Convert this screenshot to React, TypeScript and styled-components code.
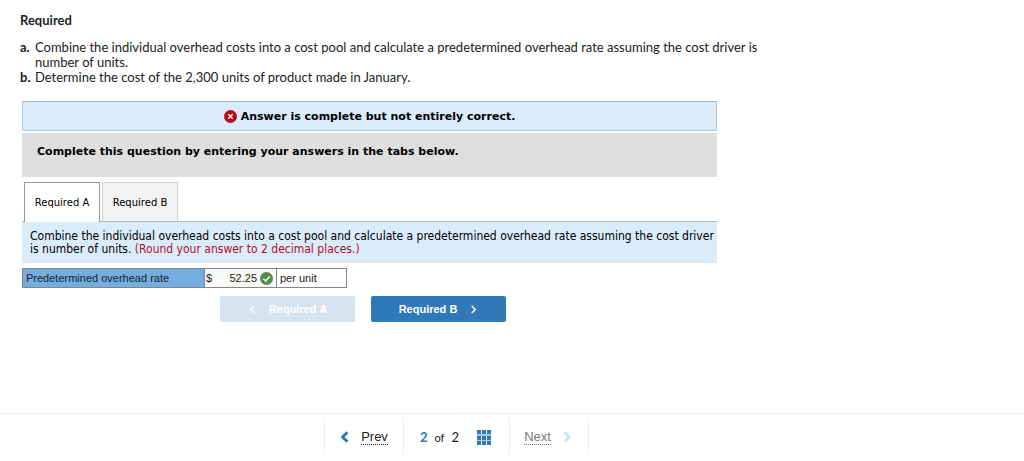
import React, { useState } from "react";
import styled, { createGlobalStyle } from "styled-components";

const prose = `Lato, sans-serif`;
const condensed = `"DejaVu Sans Condensed", "DejaVu Sans", sans-serif`;
const verdana = `"DejaVu Sans", Verdana, sans-serif`;
const arial = `"Liberation Sans", Arial, sans-serif`;

const GlobalStyle = createGlobalStyle`
  *, *::before, *::after { box-sizing: border-box; }
  body { margin: 0; background: #fff; color: #000; }
  button, input { font: inherit; color: inherit; margin: 0; }
`;

const Page = styled.div`
  min-height: 100vh;
  display: flex;
  flex-direction: column;
`;

const Content = styled.main`
  flex: 1;
  padding: 12px 20px 16px;
`;

const Intro = styled.section`
  max-width: 752px;
  font: 13px/15px ${prose};
  color: #222;
`;

const Heading = styled.h1`
  margin: 0 0 12px;
  font-size: 13px;
  line-height: 16px;
  font-weight: 700;
`;

const Steps = styled.ol`
  margin: 0;
  padding: 0;
  list-style: none;
`;

const Step = styled.li`
  display: grid;
  grid-template-columns: 15px 1fr;
`;

const Worksheet = styled.section`
  max-width: 697px;
  margin-top: 16px;
  padding-left: 2px;
  font: 11px/13px ${verdana};
`;

const Status = styled.div`
  display: flex;
  align-items: center;
  justify-content: center;
  gap: 4px;
  height: 30px;
  border: 1px solid #a6cbe6;
  border-top-color: #8fbcdc;
  background: #daecfa;
  font-weight: 700;
`;

const Instructions = styled.div`
  margin-top: 2px;
  padding: 12px 15px 19px;
  background: #dfdfdf;
  font-weight: 700;
`;

const Tabs = styled.div`
  display: flex;
  align-items: flex-start;
  gap: 2px;
  margin-top: 5px;
  padding-left: 2px;
`;

const Tab = styled.button<{ $active: boolean }>`
  position: relative;
  width: 76px;
  height: ${(p) => (p.$active ? 40 : 39)}px;
  margin-bottom: ${(p) => (p.$active ? "-1px" : "0")};
  padding: 0;
  border: 1px solid ${(p) => (p.$active ? "#999" : "#d3d3d3")};
  border-bottom: 0;
  background: ${(p) => (p.$active ? "#fff" : "#f2f2f2")};
  font-size: 10px;
`;

const Prompt = styled.div`
  padding: 8px 2px 7px 8px;
  border-top: 1px solid #b0b9bf;
  background: #daecfa;
  font: 12px/13px ${condensed};
`;

const Hint = styled.span`
  color: #b80c1f;
`;

const AnswerTable = styled.table`
  width: 325px;
  margin-top: 5px;
  table-layout: fixed;
  border-collapse: collapse;
  font: 11px/13px ${arial};
  color: #222;

  th, td {
    height: 19px;
    padding: 0 3px;
    border: 1px solid #858585;
    text-align: left;
    font-weight: 400;
  }
`;

const LabelCell = styled.th`
  width: 182px;
  background: #74aee1;
`;

const AmountCell = styled.td`
  width: 72px;
  background: #f7faf5;
`;

const Amount = styled.div`
  display: flex;
  align-items: center;
  gap: 3px;
  margin: 0 0 0 -2px;
`;

const AmountInput = styled.input`
  flex: 1;
  min-width: 0;
  height: 17px;
  padding: 0;
  border: 0;
  outline: 0;
  background: transparent;
  text-align: right;
`;

const StepButtons = styled.div`
  display: flex;
  justify-content: center;
  gap: 16px;
  margin-top: 8px;
  padding-right: 13px;
`;

const StepButton = styled.button`
  display: flex;
  align-items: center;
  justify-content: center;
  gap: 12px;
  width: 135px;
  height: 26px;
  padding: 0;
  border: 0;
  border-radius: 2px;
  background: #3078b7;
  color: #fff;
  font: 700 11px/13px ${arial};

  &:disabled {
    background: #d6e3f1;
  }
`;

const Footer = styled.footer`
  display: flex;
  justify-content: center;
  height: 48px;
  padding: 4px 112px 7px 0;
  border-top: 1px solid #eee;
  font: 13px/16px ${arial};
`;

const Cell = styled.div<{ $width: number }>`
  display: flex;
  align-items: center;
  justify-content: center;
  gap: 18px;
  width: ${(p) => p.$width}px;
  padding-top: 2px;
  border-right: 1px solid #eee;

  &:first-child {
    border-left: 1px solid #eee;
  }
`;

const PageLink = styled.a<{ $muted?: boolean }>`
  display: flex;
  align-items: center;
  gap: 10px;
  color: ${(p) => (p.$muted ? "#777" : "#222")};
  text-decoration: none;

  span {
    border-bottom: 1px dotted currentColor;
    line-height: 14px;
  }
`;

const Counter = styled.span`
  display: flex;
  gap: 7px;
  align-items: baseline;
  font: 13px/16px ${prose};
  color: #222;

  b { color: #3078b7; }
  small { font-size: 11px; }
`;

const GridButton = styled.button`
  display: flex;
  padding: 0;
  border: 0;
  background: none;
`;

interface ChevronProps {
  dir: "left" | "right";
  size: number;
  weight: number;
  color: string;
}

function Chevron({ dir, size, weight, color }: ChevronProps) {
  return (
    <svg width={size} height={size} viewBox="0 0 10 10" fill="none" stroke={color} strokeWidth={weight} aria-hidden="true">
      <path d={dir === "left" ? "M7 1L3 5L7 9" : "M3 1L7 5L3 9"} />
    </svg>
  );
}

function WrongIcon() {
  return (
    <svg width="13" height="13" viewBox="0 0 13 13" aria-hidden="true">
      <circle cx="6.5" cy="6.5" r="6.5" fill="#b80c14" />
      <path d="M4.3 4.3L8.7 8.7M8.7 4.3L4.3 8.7" stroke="#fff" strokeWidth="1.3" />
    </svg>
  );
}

function RightIcon() {
  return (
    <svg width="13" height="13" viewBox="0 0 13 13" aria-label="Correct" role="img">
      <circle cx="6.5" cy="6.5" r="6.5" fill="#568a50" />
      <path d="M3.4 6.8L5.6 8.9L9.8 4.5" stroke="#fff" strokeWidth="1.4" fill="none" />
    </svg>
  );
}

function GridIcon() {
  const columns = [0, 5, 10];
  const rows = [0, 6, 11];
  return (
    <svg width="15" height="15" viewBox="0 0 15 15" aria-hidden="true">
      <rect x="0" y="4" width="14" height="2" fill="#a9c8e4" />
      <rect x="0" y="10" width="14" height="1" fill="#a9c8e4" />
      {rows.map((y) =>
        columns.map((x) => <rect key={`${x}-${y}`} x={x} y={y} width="4" height="4" fill="#3078b7" />),
      )}
    </svg>
  );
}

export default function App() {
  const [amount, setAmount] = useState("52.25");
  return (
    <>
      <GlobalStyle />
      <Page>
        <Content>
          <Intro>
            <Heading>Required</Heading>
            <Steps>
              <Step>
                <b>a.</b>
                <span>
                  Combine the individual overhead costs into a cost pool and calculate a predetermined overhead rate
                  assuming the cost driver is number of units.
                </span>
              </Step>
              <Step>
                <b>b.</b>
                <span>Determine the cost of the 2,300 units of product made in January.</span>
              </Step>
            </Steps>
          </Intro>

          <Worksheet>
            <Status role="status">
              <WrongIcon />
              Answer is complete but not entirely correct.
            </Status>
            <Instructions>Complete this question by entering your answers in the tabs below.</Instructions>
            <Tabs role="tablist">
              <Tab type="button" role="tab" aria-selected="true" $active>
                Required A
              </Tab>
              <Tab type="button" role="tab" aria-selected="false" $active={false}>
                Required B
              </Tab>
            </Tabs>
            <Prompt>
              Combine the individual overhead costs into a cost pool and calculate a predetermined overhead rate
              assuming the cost driver is number of units. <Hint>(Round your answer to 2 decimal places.)</Hint>
            </Prompt>
            <AnswerTable>
              <tbody>
                <tr>
                  <LabelCell scope="row">
                    <label htmlFor="rate">Predetermined overhead rate</label>
                  </LabelCell>
                  <AmountCell>
                    <Amount>
                      $
                      <AmountInput id="rate" value={amount} onChange={(e) => setAmount(e.target.value)} />
                      <RightIcon />
                    </Amount>
                  </AmountCell>
                  <td>per unit</td>
                </tr>
              </tbody>
            </AnswerTable>
            <StepButtons>
              <StepButton type="button" disabled>
                <Chevron dir="left" size={9} weight={1.6} color="#fff" />
                Required A
              </StepButton>
              <StepButton type="button">
                Required B
                <Chevron dir="right" size={9} weight={1.6} color="#fff" />
              </StepButton>
            </StepButtons>
          </Worksheet>
        </Content>

        <Footer>
          <Cell $width={80}>
            <PageLink href="#prev">
              <Chevron dir="left" size={12} weight={2.4} color="#3078b7" />
              <span>Prev</span>
            </PageLink>
          </Cell>
          <Cell $width={106}>
            <Counter>
              <b>2</b>
              <small>of</small>
              <span>2</span>
            </Counter>
            <GridButton type="button" aria-label="Question list">
              <GridIcon />
            </GridButton>
          </Cell>
          <Cell $width={79}>
            <PageLink href="#next" $muted>
              <span>Next</span>
              <Chevron dir="right" size={12} weight={2.4} color="#d6e3f1" />
            </PageLink>
          </Cell>
        </Footer>
      </Page>
    </>
  );
}
